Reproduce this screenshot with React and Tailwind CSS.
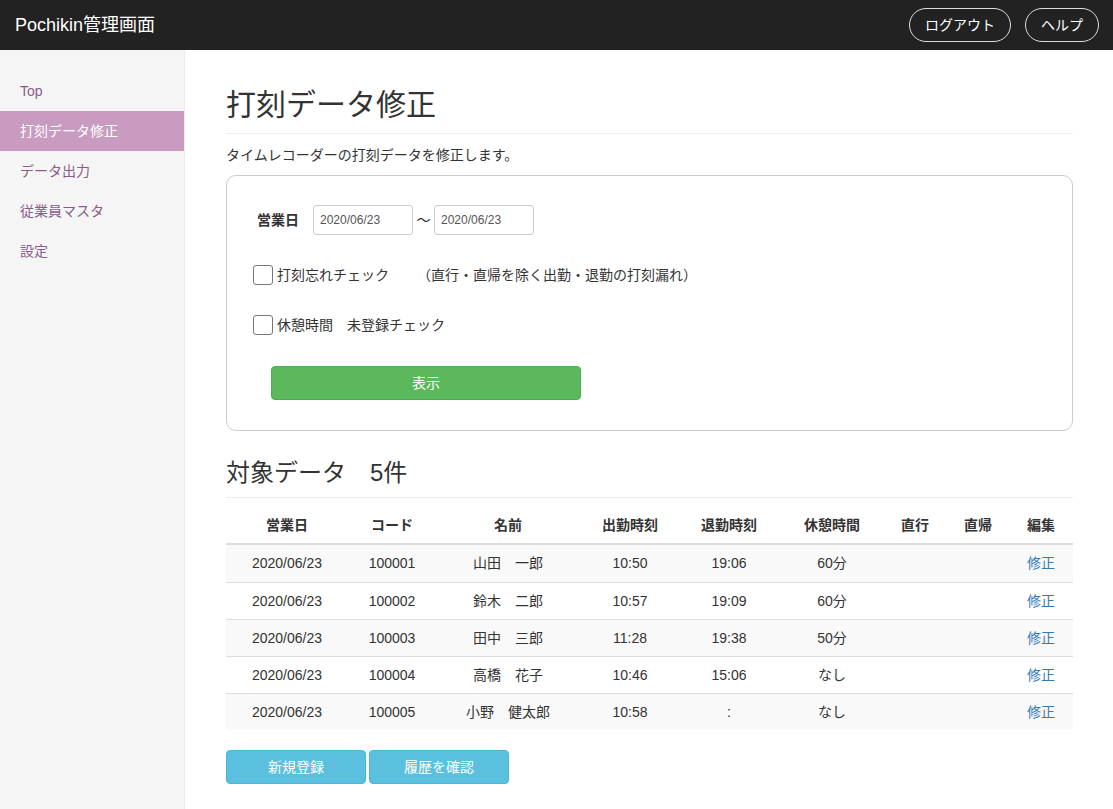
import React from "react";

const rows = [
  ["2020/06/23", "100001", "山田　一郎", "10:50", "19:06", "60分"],
  ["2020/06/23", "100002", "鈴木　二郎", "10:57", "19:09", "60分"],
  ["2020/06/23", "100003", "田中　三郎", "11:28", "19:38", "50分"],
  ["2020/06/23", "100004", "高橋　花子", "10:46", "15:06", "なし"],
  ["2020/06/23", "100005", "小野　健太郎", "10:58", ":", "なし"],
];

const cols = "grid grid-cols-[122px_88px_144px_100px_98px_108px_58px_68px_58px]";

export default function App() {
  return (
    <div
      className="min-h-[809px] bg-white text-[14px] text-[#333]"
      style={{ fontFamily: '"Liberation Sans", "Noto Sans CJK JP", sans-serif' }}
    >
      <header className="h-[50px] bg-[#222] flex items-center justify-between pl-[15px] pr-[14px]">
        <div className="text-[18px] text-white">Pochikin管理画面</div>
        <div className="flex gap-[14px]">
          <button className="h-[34px] px-[15px] rounded-full border border-[#ddd] text-white text-[14px]">ログアウト</button>
          <button className="h-[34px] px-[15px] rounded-full border border-[#ddd] text-white text-[14px]">ヘルプ</button>
        </div>
      </header>
      <div className="flex">
        <aside className="w-[185px] shrink-0 min-h-[759px] bg-[#f5f5f5] border-r border-[#eaeaea] pt-[21px]">
          {["Top", "打刻データ修正", "データ出力", "従業員マスタ", "設定"].map((t, i) => (
            <div
              key={t}
              className={
                "h-[40px] leading-[40px] pl-[20px] " +
                (i === 1 ? "bg-[#c99bc1] text-white" : "text-[#8b5c8b]")
              }
            >
              {t}
            </div>
          ))}
        </aside>
        <main className="flex-1 pl-[41px] pr-[40px]">
          <h1 className="mt-[38px] text-[30px] leading-[33px] pb-[12px] border-b border-[#eee]">打刻データ修正</h1>
          <p className="mt-[11px] h-[20px] leading-[20px]">タイムレコーダーの打刻データを修正します。</p>
          <div className="mt-[10px] border border-[#ccc] rounded-[10px] pt-[29px] pb-[30px] pl-[26px]">
            <div className="flex items-center h-[30px] pl-[4px]">
              <span className="font-bold w-[56px]">営業日</span>
              <div className="w-[100px] h-[30px] border border-[#ccc] rounded-[3px] px-[6px] flex items-center text-[12px] text-[#555]">2020/06/23</div>
              <span className="w-[21px] text-center">～</span>
              <div className="w-[100px] h-[30px] border border-[#ccc] rounded-[3px] px-[6px] flex items-center text-[12px] text-[#555]">2020/06/23</div>
            </div>
            <div className="flex items-center mt-[30px] h-[20px]">
              <span className="w-[20px] h-[20px] border-[1.5px] border-[#777] rounded-[3px] bg-white"></span>
              <span className="ml-[4px]">打刻忘れチェック</span>
              <span className="ml-[28px]">（直行・直帰を除く出勤・退勤の打刻漏れ）</span>
            </div>
            <div className="flex items-center mt-[30px] h-[20px]">
              <span className="w-[20px] h-[20px] border-[1.5px] border-[#777] rounded-[3px] bg-white"></span>
              <span className="ml-[4px]">休憩時間　未登録チェック</span>
            </div>
            <button className="mt-[31px] ml-[18px] w-[310px] h-[34px] bg-[#5cb85c] border border-[#4cae4c] rounded-[4px] text-white">表示</button>
          </div>
          <h2 className="mt-[29px] text-[24px] leading-[26px] pb-[11px] border-b border-[#eee]">対象データ　5件</h2>
          <div className="mt-[9px]">
            <div className={cols + " h-[38px] border-b-2 border-[#ddd] font-bold items-center text-center"}>
              {["営業日", "コード", "名前", "出勤時刻", "退勤時刻", "休憩時間", "直行", "直帰", "編集"].map((h) => (
                <div key={h}>{h}</div>
              ))}
            </div>
            {rows.map((r, i) => (
              <div
                key={i}
                className={
                  cols +
                  " h-[37px] items-center text-center " +
                  (i > 0 ? "border-t border-[#ddd] " : "") +
                  (i % 2 === 0 ? "bg-[#f9f9f9]" : "bg-white")
                }
              >
                {r.map((c, j) => (
                  <div key={j}>{c}</div>
                ))}
                <div></div>
                <div></div>
                <div className="text-[#337ab7]">修正</div>
              </div>
            ))}
          </div>
          <div className="mt-[20px] flex gap-[3px]">
            <button className="w-[140px] h-[34px] bg-[#5bc0de] border border-[#46b8da] rounded-[4px] text-white">新規登録</button>
            <button className="w-[140px] h-[34px] bg-[#5bc0de] border border-[#46b8da] rounded-[4px] text-white">履歴を確認</button>
          </div>
        </main>
      </div>
    </div>
  );
}
